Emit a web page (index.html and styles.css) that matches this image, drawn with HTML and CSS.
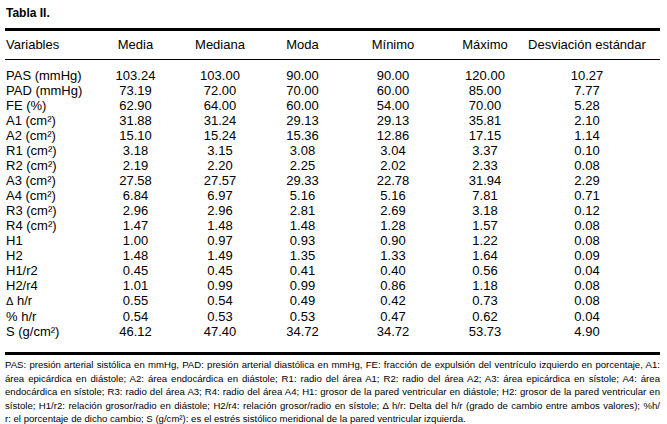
FILE: index.html
```html
<!DOCTYPE html>
<html lang="es">
<head>
<meta charset="utf-8">
<title>Tabla II.</title>
<link rel="stylesheet" href="styles.css">
</head>
<body>
<div class="page">
  <h1 class="title">Tabla II.</h1>
  <div class="table">
    <div class="row head">
      <div class="cell var">Variables</div>
      <div class="cell">Media</div>
      <div class="cell">Mediana</div>
      <div class="cell">Moda</div>
      <div class="cell">Mínimo</div>
      <div class="cell">Máximo</div>
      <div class="cell">Desviación estándar</div>
    </div>
    <div class="body">
      <div class="row"><div class="cell var">PAS (mmHg)</div><div class="cell">103.24</div><div class="cell">103.00</div><div class="cell">90.00</div><div class="cell">90.00</div><div class="cell">120.00</div><div class="cell">10.27</div></div>
      <div class="row"><div class="cell var">PAD (mmHg)</div><div class="cell">73.19</div><div class="cell">72.00</div><div class="cell">70.00</div><div class="cell">60.00</div><div class="cell">85.00</div><div class="cell">7.77</div></div>
      <div class="row"><div class="cell var">FE (%)</div><div class="cell">62.90</div><div class="cell">64.00</div><div class="cell">60.00</div><div class="cell">54.00</div><div class="cell">70.00</div><div class="cell">5.28</div></div>
      <div class="row"><div class="cell var">A1 (cm²)</div><div class="cell">31.88</div><div class="cell">31.24</div><div class="cell">29.13</div><div class="cell">29.13</div><div class="cell">35.81</div><div class="cell">2.10</div></div>
      <div class="row"><div class="cell var">A2 (cm²)</div><div class="cell">15.10</div><div class="cell">15.24</div><div class="cell">15.36</div><div class="cell">12.86</div><div class="cell">17.15</div><div class="cell">1.14</div></div>
      <div class="row"><div class="cell var">R1 (cm²)</div><div class="cell">3.18</div><div class="cell">3.15</div><div class="cell">3.08</div><div class="cell">3.04</div><div class="cell">3.37</div><div class="cell">0.10</div></div>
      <div class="row"><div class="cell var">R2 (cm²)</div><div class="cell">2.19</div><div class="cell">2.20</div><div class="cell">2.25</div><div class="cell">2.02</div><div class="cell">2.33</div><div class="cell">0.08</div></div>
      <div class="row"><div class="cell var">A3 (cm²)</div><div class="cell">27.58</div><div class="cell">27.57</div><div class="cell">29.33</div><div class="cell">22.78</div><div class="cell">31.94</div><div class="cell">2.29</div></div>
      <div class="row"><div class="cell var">A4 (cm²)</div><div class="cell">6.84</div><div class="cell">6.97</div><div class="cell">5.16</div><div class="cell">5.16</div><div class="cell">7.81</div><div class="cell">0.71</div></div>
      <div class="row"><div class="cell var">R3 (cm²)</div><div class="cell">2.96</div><div class="cell">2.96</div><div class="cell">2.81</div><div class="cell">2.69</div><div class="cell">3.18</div><div class="cell">0.12</div></div>
      <div class="row"><div class="cell var">R4 (cm²)</div><div class="cell">1.47</div><div class="cell">1.48</div><div class="cell">1.48</div><div class="cell">1.28</div><div class="cell">1.57</div><div class="cell">0.08</div></div>
      <div class="row"><div class="cell var">H1</div><div class="cell">1.00</div><div class="cell">0.97</div><div class="cell">0.93</div><div class="cell">0.90</div><div class="cell">1.22</div><div class="cell">0.08</div></div>
      <div class="row"><div class="cell var">H2</div><div class="cell">1.48</div><div class="cell">1.49</div><div class="cell">1.35</div><div class="cell">1.33</div><div class="cell">1.64</div><div class="cell">0.09</div></div>
      <div class="row"><div class="cell var">H1/r2</div><div class="cell">0.45</div><div class="cell">0.45</div><div class="cell">0.41</div><div class="cell">0.40</div><div class="cell">0.56</div><div class="cell">0.04</div></div>
      <div class="row"><div class="cell var">H2/r4</div><div class="cell">1.01</div><div class="cell">0.99</div><div class="cell">0.99</div><div class="cell">0.86</div><div class="cell">1.18</div><div class="cell">0.08</div></div>
      <div class="row"><div class="cell var"><span class="delta">Δ</span> h/r</div><div class="cell">0.55</div><div class="cell">0.54</div><div class="cell">0.49</div><div class="cell">0.42</div><div class="cell">0.73</div><div class="cell">0.08</div></div>
      <div class="row"><div class="cell var">% h/r</div><div class="cell">0.54</div><div class="cell">0.53</div><div class="cell">0.53</div><div class="cell">0.47</div><div class="cell">0.62</div><div class="cell">0.04</div></div>
      <div class="row"><div class="cell var">S (g/cm²)</div><div class="cell">46.12</div><div class="cell">47.40</div><div class="cell">34.72</div><div class="cell">34.72</div><div class="cell">53.73</div><div class="cell">4.90</div></div>
    </div>
  </div>
  <p class="note">
    <span class="line">PAS: presión arterial sistólica en mmHg, PAD: presión arterial diastólica en mmHg, FE: fracción de expulsión del ventrículo izquierdo en porcentaje, A1:</span>
    <span class="line">área epicárdica en diástole; A2: área endocárdica en diástole; R1: radio del área A1; R2: radio del área A2; A3: área epicárdica en sístole; A4: área</span>
    <span class="line">endocárdica en sístole; R3: radio del área A3; R4: radio del área A4; H1: grosor de la pared ventricular en diástole; H2: grosor de la pared ventricular en</span>
    <span class="line">sístole; H1/r2: relación grosor/radio en diástole; H2/r4: relación grosor/radio en sístole; Δ h/r: Delta del h/r (grado de cambio entre ambos valores); %h/</span>
    <span class="line last">r: el porcentaje de dicho cambio; S (g/cm²): es el estrés sistólico meridional de la pared ventricular izquierda.</span>
  </p>
</div>
</body>
</html>
```

FILE: styles.css
```css
html, body {
  margin: 0;
  padding: 0;
  background: #ffffff;
}

body {
  font-family: "Liberation Sans", Arial, sans-serif;
  color: #000000;
}

.page {
  width: 655px;
  padding: 6px 0 0 5px;
}

.title {
  margin: 0 0 0 1px;
  font-size: 12px;
  line-height: 14px;
  font-weight: bold;
}

.table {
  margin-top: 8px;
  border-top: 3px solid #000;
  border-bottom: 3px solid #000;
  font-size: 13px;
}

.row {
  display: grid;
  grid-template-columns: 95px 71px 98px 67px 114px 70px 134px;
  line-height: 15px;
}

.head {
  padding: 6px 0 7px;
  border-bottom: 1px solid #000;
}

.body {
  padding: 8px 0 13px;
}

.cell {
  text-align: center;
  white-space: nowrap;
}

.cell.var {
  text-align: left;
  padding-left: 1px;
}

.delta {
  font-size: 11px;
}

.note {
  margin: 3px 0 0;
  font-size: 9.6px;
  line-height: 13.5px;
}

.line {
  display: block;
  white-space: nowrap;
  text-align: justify;
  text-align-last: justify;
}

.line.last {
  text-align-last: left;
}
```
